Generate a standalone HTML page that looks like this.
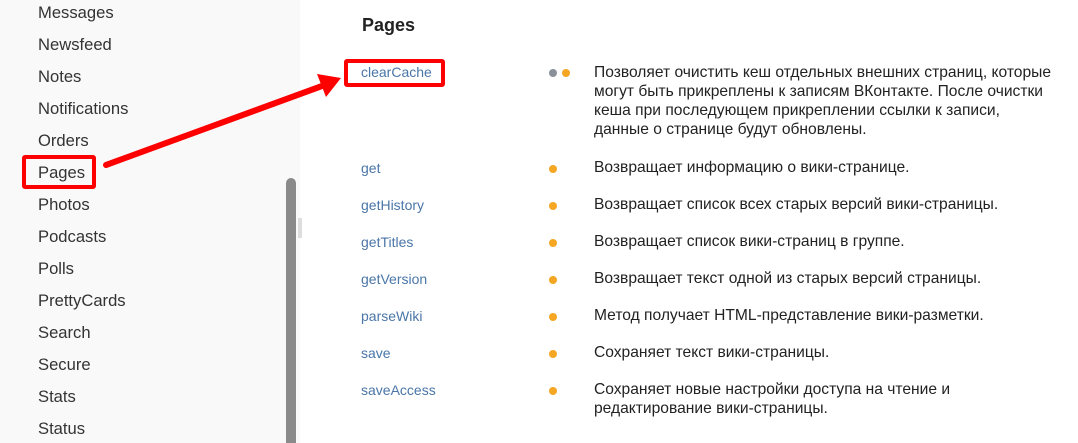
<!DOCTYPE html>
<html style="margin:0;height:443px;overflow:hidden"><head><meta charset="utf-8"><style>
body{margin:0;width:1078px;height:443px;overflow:hidden;background:#fff;font-family:"Liberation Sans","Noto Sans CJK SC",sans-serif;position:relative}
.side{position:absolute;left:0;top:0;width:300px;height:443px;background:#f9f9f9}
.si{position:absolute;left:38px;font-size:16.6px;color:#333;line-height:20px}
.sb{position:absolute;left:286px;top:178px;width:10px;height:265px;background:#8a8a8a;border-radius:5px 5px 0 0}
.hd{position:absolute;left:298px;top:218px;width:4px;height:20px;background:#ddd}
h2{position:absolute;left:362px;top:15px;margin:0;font-size:18px;font-weight:bold;color:#222}
.m{position:absolute;left:361px;font-size:14px;color:#4a76a8;line-height:18px}
.d{position:absolute;left:594px;font-size:15.6px;color:#222;line-height:19px;width:480px}
.dot{position:absolute;width:8px;height:8px;border-radius:4px;background:#f5a623}
.box{position:absolute;border:4px solid #f00;border-radius:3px}
</style></head><body>
<div class="side"></div>
<div class="sb"></div><div class="hd"></div>
<div class="si" style="top:3px">Messages</div>
<div class="si" style="top:35px">Newsfeed</div>
<div class="si" style="top:67px">Notes</div>
<div class="si" style="top:99px">Notifications</div>
<div class="si" style="top:131px">Orders</div>
<div class="si" style="top:163px">Pages</div>
<div class="si" style="top:195px">Photos</div>
<div class="si" style="top:227px">Podcasts</div>
<div class="si" style="top:259px">Polls</div>
<div class="si" style="top:291px">PrettyCards</div>
<div class="si" style="top:323px">Search</div>
<div class="si" style="top:355px">Secure</div>
<div class="si" style="top:387px">Stats</div>
<div class="si" style="top:419px">Status</div>
<div class="box" style="left:22px;top:155px;width:66px;height:26px"></div>
<h2>Pages</h2>
<div class="box" style="left:344px;top:59px;width:93px;height:20px"></div>
<div class="m" style="top:63px">clearCache</div>
<div class="dot" style="left:549px;top:69px;background:#8a9099"></div>
<div class="dot" style="left:562px;top:69px"></div>
<div class="d" style="top:63px">Позволяет очистить кеш отдельных внешних страниц, которые<br>могут быть прикреплены к записям ВКонтакте. После очистки<br>кеша при последующем прикреплении ссылки к записи,<br>данные о странице будут обновлены.</div>
<div class="m" style="top:159px">get</div><div class="dot" style="left:549px;top:165px"></div><div class="d" style="top:158px">Возвращает информацию о вики-странице.</div>
<div class="m" style="top:196px">getHistory</div><div class="dot" style="left:549px;top:202px"></div><div class="d" style="top:195px">Возвращает список всех старых версий вики-страницы.</div>
<div class="m" style="top:233px">getTitles</div><div class="dot" style="left:549px;top:239px"></div><div class="d" style="top:232px">Возвращает список вики-страниц в группе.</div>
<div class="m" style="top:270px">getVersion</div><div class="dot" style="left:549px;top:276px"></div><div class="d" style="top:269px">Возвращает текст одной из старых версий страницы.</div>
<div class="m" style="top:307px">parseWiki</div><div class="dot" style="left:549px;top:313px"></div><div class="d" style="top:306px">Метод получает HTML-представление вики-разметки.</div>
<div class="m" style="top:344px">save</div><div class="dot" style="left:549px;top:350px"></div><div class="d" style="top:343px">Сохраняет текст вики-страницы.</div>
<div class="m" style="top:381px">saveAccess</div><div class="dot" style="left:549px;top:387px"></div><div class="d" style="top:380px">Сохраняет новые настройки доступа на чтение и<br>редактирование вики-страницы.</div>
<svg style="position:absolute;left:0;top:0" width="1078" height="443">
<line x1="106" y1="165" x2="322" y2="86" stroke="#f00" stroke-width="6" stroke-linecap="round"/>
<polygon points="341,78 317,74 326,97" fill="#f00"/>
</svg>
</body></html>
